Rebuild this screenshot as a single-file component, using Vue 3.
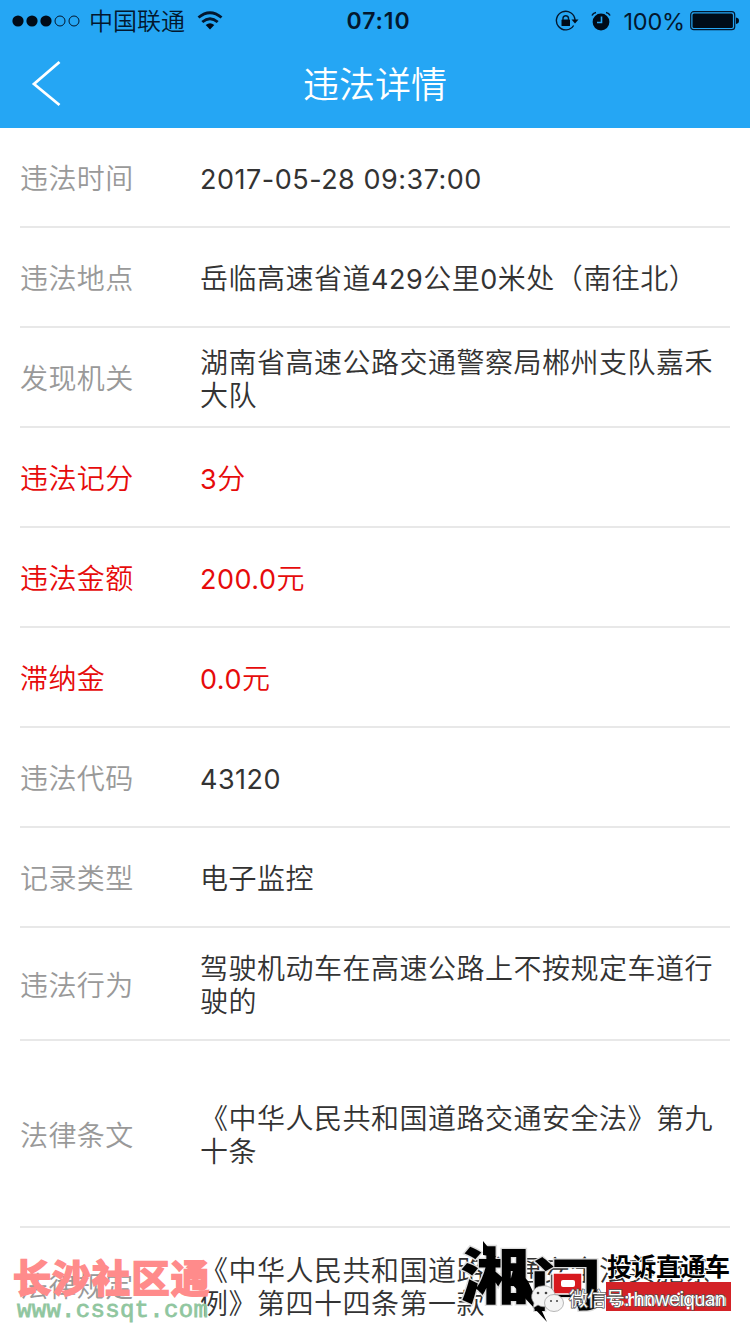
<template>
  <div class="page">
    <header class="header">
      <div class="status-bar">
        <div class="status-left">
          <svg class="signal" width="68" height="14" viewBox="0 0 68 14">
            <circle v-for="n in 3" :key="n" :cx="14 * n - 8" cy="7" r="5.6" />
            <circle v-for="n in 2" :key="'o' + n" :cx="14 * n + 34" cy="7" r="5" fill="none" stroke="#03172e" />
          </svg>
          <span class="carrier">中国联通</span>
          <svg class="wifi" width="26" height="20" viewBox="0 0 26 20">
            <path d="M1.5 6.5Q13-3 24.5 6.5M5.3 11Q13 4.5 20.7 11" fill="none" stroke="#03172e" stroke-width="2.9" />
            <path d="M8.7 14Q13 10.6 17.3 14L13 18.5Z" />
          </svg>
        </div>
        <span class="clock">07:10</span>
        <div class="status-right">
          <svg class="lock" width="25" height="22" viewBox="0 0 25 22">
            <path d="M18.6 15.5A9.3 9.3 0 1 1 20 10" fill="none" stroke="#03172e" stroke-width="1.4" />
            <path d="M16.5 9.5H23.5L20 13.5Z" />
            <rect x="6.5" y="9.5" width="8.5" height="6.5" rx=".6" />
            <path d="M8 10V8a2.8 2.8 0 0 1 5.5 0v2" fill="none" stroke="#03172e" stroke-width="1.4" />
          </svg>
          <svg class="alarm" width="20" height="20" viewBox="0 0 20 20">
            <circle cx="10" cy="11" r="8.4" />
            <path d="M1 4.5Q2 2 5 1.5M19 4.5Q18 2 15 1.5" fill="none" stroke="#03172e" stroke-width="1.6" />
            <path d="M10.5 5.5V11.5H6" fill="none" stroke="#25a6f4" stroke-width="1.6" />
          </svg>
          <span class="percent">100%</span>
          <svg class="battery" width="50" height="20" viewBox="0 0 50 20">
            <rect x=".7" y=".7" width="44" height="18" rx="3" fill="none" stroke="#03172e" stroke-width="1.2" />
            <rect x="2.5" y="2.5" width="40.4" height="14.4" rx="1.5" />
            <path d="M46 6.5Q49 7 49 9.7T46 13Z" />
          </svg>
        </div>
      </div>
      <div class="nav-bar">
        <svg class="back" width="32" height="48" viewBox="0 0 32 48">
          <path d="M28.5 2L3 24L28.5 45" fill="none" stroke="#fff" stroke-width="2.8" />
        </svg>
        <h1>违法详情</h1>
      </div>
    </header>

    <ul class="list">
      <li v-for="item in details" :key="item.label" :class="['row', item.type]">
        <span class="label">{{ item.label }}</span>
        <div class="value">
          <span v-for="(part, i) in splitDigits(item.value)" :key="i" :class="{ digits: /\d/.test(part) }">{{ part }}</span>
        </div>
      </li>
    </ul>

    <!-- left site watermark -->
    <div class="site-mark">
      <div class="site-name">长沙社区通</div>
      <div class="site-url">www.cssqt.com</div>
    </div>

    <!-- right logo + wechat id -->
    <svg class="logo-mark" width="300" height="104" viewBox="0 0 300 104">
      <g class="logo-word">
        <text transform="translate(10 69) scale(1.02 .9)">湘</text>
        <text transform="translate(80 75) scale(1.05 .82)">问</text>
      </g>
      <path d="M33 25V11L46 27ZM64 36L78 51L97 92L60 52Z" fill="#000" />
      <path d="M103 43H132V64H103Z" fill="#d7191e" stroke="#fff" stroke-width="1.5" />
      <rect x="111" y="50" width="14" height="7" rx="2" fill="#fff" />
      <text class="slogan" x="157" y="46" textLength="123">投诉直通车</text>
      <rect x="156" y="52" width="125" height="29" fill="#d32227" />
      <text class="host" x="160" y="76" textLength="117">ts.hnoweiqm.cn</text>
      <g fill="#f4f4f4" stroke="#999" stroke-width=".7">
        <path d="M92 56a11 10.5 0 1 1-4 19l-5 3 1-5a10.5 10.5 0 0 1 8-17Z" />
        <ellipse cx="104" cy="73" rx="9.5" ry="8.5" />
      </g>
      <g fill="#444">
        <circle cx="88" cy="63" r="1.3" />
        <circle cx="96" cy="63" r="1.3" />
        <circle cx="101" cy="71" r="1" />
        <circle cx="107" cy="71" r="1" />
      </g>
      <text class="wechat" x="119" y="76" textLength="157">微信号: hnweiquan</text>
    </svg>
  </div>
</template>

<script setup>
const details = [
  { label: '违法时间', value: '2017-05-28 09:37:00' },
  { label: '违法地点', value: '岳临高速省道429公里0米处（南往北）' },
  { label: '发现机关', value: '湖南省高速公路交通警察局郴州支队嘉禾大队' },
  { label: '违法记分', value: '3分', type: 'red' },
  { label: '违法金额', value: '200.0元', type: 'red' },
  { label: '滞纳金', value: '0.0元', type: 'red' },
  { label: '违法代码', value: '43120' },
  { label: '记录类型', value: '电子监控' },
  { label: '违法行为', value: '驾驶机动车在高速公路上不按规定车道行驶的', type: 'medium' },
  { label: '法律条文', value: '《中华人民共和国道路交通安全法》第九十条', type: 'tall' },
  { label: '法律规定', value: '《中华人民共和国道路交通安全法实施条例》第四十四条第一款', type: 'last' }
]

// digits are set a bit smaller than the Chinese text
const splitDigits = (text) => text.split(/([\d.:\- ]+)/).filter(Boolean)
</script>

<style>
body {
  margin: 0;
  background: #fff;
}
</style>

<style scoped>
.page {
  position: relative;
  width: 750px;
  height: 1334px;
  overflow: hidden;
  background: #fff;
  font-family: Inter, "Noto Sans CJK SC", sans-serif;
}
.header {
  height: 128px;
  background: #25a6f4;
  color: #03172e;
}
.status-bar {
  display: grid;
  grid-template-columns: 1fr auto 1fr;
  align-items: center;
  box-sizing: border-box;
  height: 40px;
  padding: 1px 10px 0 12px;
}
.status-bar svg {
  fill: #000b18;
}
.status-left,
.status-right {
  display: flex;
  align-items: center;
}
.status-right {
  justify-content: flex-end;
}
.carrier {
  margin: 2px 12px 0 9px;
  font-size: 24px;
  font-weight: 350;
  line-height: 36px;
}
.clock {
  margin-left: 5px;
  font-size: 23px;
  font-weight: 600;
  letter-spacing: 0.9px;
}
.lock {
  margin-left: 2px;
}
.alarm {
  margin: 0 13px 0 11px;
}
.percent {
  margin: 1px 5px 0 0;
  font-size: 23.5px;
  letter-spacing: -0.2px;
}
.nav-bar {
  display: grid;
  grid-template-columns: 100px 1fr 100px;
  align-items: center;
  height: 88px;
}
.back {
  margin-left: 31px;
}
h1 {
  margin: 2px 0 0;
  color: #fff;
  font-size: 36px;
  font-weight: 350;
  line-height: 84px;
  text-align: center;
}
.list {
  margin: 0;
  padding: 0 20px;
  list-style: none;
}
.row {
  display: flex;
  align-items: center;
  box-sizing: border-box;
  height: 100px;
  padding-top: 5px;
  border-bottom: 2px solid #e8e8e8;
  color: #333;
  font-size: 28px;
  font-weight: 350;
  line-height: 33px;
}
.label {
  width: 180px;
  flex-shrink: 0;
  color: #999;
  letter-spacing: 0.4px;
}
.value {
  flex: 1;
  letter-spacing: 0.5px;
}
.digits {
  font-size: 27px;
  font-weight: 400;
  line-height: 1;
}
.red,
.red .label {
  color: #e60b0b;
}
.medium {
  height: 113px;
}
.tall {
  height: 187px;
}
.last {
  height: 116px;
}
.site-mark {
  position: absolute;
  left: 13px;
  top: 1258px;
}
.site-name {
  color: #ff8b8b;
  font-size: 38px;
  font-weight: 700;
  letter-spacing: 1.5px;
  line-height: 40px;
  -webkit-text-stroke: 2px #ff8b8b;
}
.site-url {
  margin-left: 4px;
  color: #90c69f;
  font: 24px/26px "Liberation Mono", monospace;
  letter-spacing: 0.3px;
  -webkit-text-stroke: 0.8px #90c69f;
}
.logo-mark {
  position: absolute;
  left: 450px;
  top: 1230px;
}
.logo-word text {
  fill: #000;
  stroke: #ddd;
  stroke-width: 3px;
  paint-order: stroke;
  font-size: 68px;
  font-weight: 900;
}
.slogan {
  fill: #000;
  stroke: #fff;
  stroke-width: 2px;
  paint-order: stroke;
  font-size: 25px;
  font-weight: 700;
}
.host {
  fill: #fff;
  font-size: 17px;
  font-weight: 700;
}
.wechat {
  fill: #fff;
  stroke: #555;
  stroke-width: 1.5px;
  paint-order: stroke;
  font-size: 19px;
}
</style>
